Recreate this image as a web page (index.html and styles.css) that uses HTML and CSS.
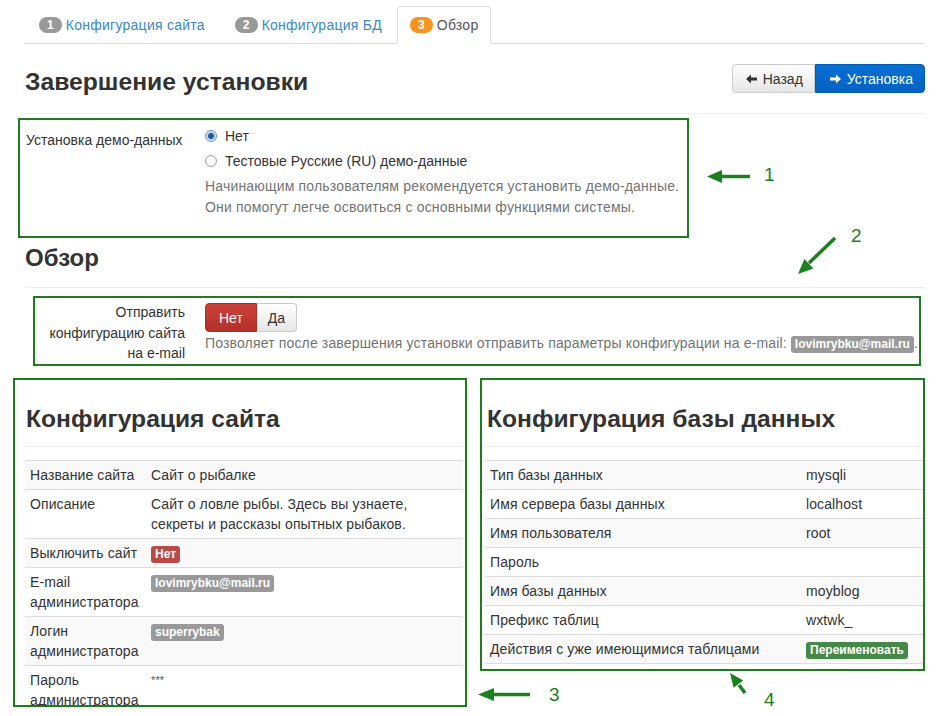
FILE: index.html
```html
<!DOCTYPE html>
<html>
  <head>
    <meta charset="utf-8" />
    <link rel="stylesheet" href="styles.css">
  </head>

  <body>
    <div class="page">
      <ul class="tabs">
        <li class="tab"><span class="step">1</span> Конфигурация сайта</li>
        <li class="tab"><span class="step">2</span> Конфигурация БД</li>
        <li class="tab active"><span class="step step-current">3</span> Обзор</li>
      </ul>

      <div class="page-header">
        <h1>Завершение установки</h1>
        <div class="btn-group">
          <button class="btn btn-back">
            <svg class="icon" width="11" height="10" viewBox="0 0 11 10"><path d="M0 5 L5 0.5 L5 3.4 L11 3.4 L11 6.6 L5 6.6 L5 9.5 Z" fill="#333"/></svg>
            Назад
          </button>
          <button class="btn btn-primary">
            <svg class="icon" width="11" height="10" viewBox="0 0 11 10"><path d="M11 5 L6 0.5 L6 3.4 L0 3.4 L0 6.6 L6 6.6 L6 9.5 Z" fill="#fff"/></svg>
            Установка
          </button>
        </div>
      </div>

      <div class="note note-demo">
        <div class="form-label">Установка демо-данных</div>
        <div class="form-controls">
          <label class="radio"><input type="radio" name="demo" checked /> Нет</label>
          <label class="radio"><input type="radio" name="demo" /> Тестовые Русские (RU) демо-данные</label>
          <p class="help help-demo">
            Начинающим пользователям рекомендуется установить демо-данные.<br />
            Они помогут легче освоиться с основными функциями системы.
          </p>
        </div>
      </div>

      <h2 class="section-title">Обзор</h2>

      <div class="note note-mail">
        <div class="form-label form-label-right">Отправить<br />конфигурацию сайта<br />на e-mail</div>
        <div class="form-controls form-controls-mail">
          <div class="toggle">
            <button class="toggle-btn toggle-on">Нет</button><button class="toggle-btn">Да</button>
          </div>
          <p class="help help-mail">
            Позволяет после завершения установки отправить параметры конфигурации на e-mail:
            <span class="label">lovimrybku@mail.ru</span>.
          </p>
        </div>
      </div>

      <div class="summary">
        <div class="note note-site">
          <h3>Конфигурация сайта</h3>
          <table class="info">
            <col class="key-site" />
            <col />
            <tr><td>Название сайта</td><td>Сайт о рыбалке</td></tr>
            <tr><td>Описание</td><td>Сайт о ловле рыбы. Здесь вы узнаете, секреты и рассказы опытных рыбаков.</td></tr>
            <tr><td>Выключить сайт</td><td><span class="label label-red">Нет</span></td></tr>
            <tr><td>E-mail администратора</td><td><span class="label">lovimrybku@mail.ru</span></td></tr>
            <tr><td>Логин администратора</td><td><span class="label">superrybak</span></td></tr>
            <tr><td>Пароль администратора</td><td class="stars">***</td></tr>
          </table>
        </div>

        <div class="note note-db">
          <h3>Конфигурация базы данных</h3>
          <table class="info">
            <col class="key-db" />
            <col />
            <tr><td>Тип базы данных</td><td>mysqli</td></tr>
            <tr><td>Имя сервера базы данных</td><td>localhost</td></tr>
            <tr><td>Имя пользователя</td><td>root</td></tr>
            <tr><td>Пароль</td><td></td></tr>
            <tr><td>Имя базы данных</td><td>moyblog</td></tr>
            <tr><td>Префикс таблиц</td><td>wxtwk_</td></tr>
            <tr><td>Действия с уже имеющимися таблицами</td><td><span class="label label-green">Переименовать</span></td></tr>
          </table>
        </div>
      </div>
    </div>

    <svg class="marks" width="938" height="716" viewBox="0 0 938 716">
      <g stroke="#1d8020" stroke-width="3.5" fill="#1d8020">
        <line x1="750" y1="176.5" x2="718" y2="176.5" />
        <polygon points="707,176.5 722,170 722,183" stroke="none" />
        <line x1="835" y1="238" x2="809" y2="263" />
        <polygon points="798,274 813.4,268.4 804.4,259" stroke="none" />
        <line x1="530" y1="694.5" x2="490" y2="694.5" />
        <polygon points="478,694.5 494,688 494,701" stroke="none" />
        <line x1="745" y1="693" x2="739" y2="685" />
        <polygon points="730,673 743.2,680.6 733.6,687.8" stroke="none" />
      </g>
      <g class="mark-num">
        <text x="764" y="181">1</text>
        <text x="851" y="242">2</text>
        <text x="549" y="701">3</text>
        <text x="764" y="706">4</text>
      </g>
    </svg>
  </body>
</html>
```

FILE: styles.css
```css
body {
  margin: 0;
  font-family: "Liberation Sans", Arial, sans-serif;
  font-size: 14px;
  color: #333;
  background: #fff;
}

.page {
  padding: 0 13px 0 25px;
}

/* steps */

.tabs {
  list-style: none;
  display: flex;
  margin: 6px 0 0 -1px;
  padding: 0;
  border-bottom: 1px solid #ddd;
}

.tab {
  padding: 8px 14px 8px 14px;
  line-height: 20px;
  letter-spacing: 0.25px;
  color: #3a87c3;
  border: 1px solid transparent;
  border-radius: 4px 4px 0 0;
  margin-bottom: -1px;
}

.tab.active {
  padding: 8px 12px 8px 12px;
  color: #555;
  background: #fff;
  border-color: #ddd;
  border-bottom-color: #fff;
}

.step {
  display: inline-block;
  padding: 1px 8px;
  font-size: 12px;
  font-weight: bold;
  line-height: 14px;
  letter-spacing: 0;
  color: #fff;
  background: #999;
  border-radius: 9px;
  vertical-align: 1px;
}

.step-current {
  background: #f7941d;
}

/* header */

.page-header {
  display: flex;
  justify-content: space-between;
  align-items: flex-start;
  padding-bottom: 17px;
  border-bottom: 1px solid #eee;
}

h1 {
  margin: 24px 0 0;
  font-size: 24.7px;
  line-height: 28px;
  font-weight: bold;
}

.btn-group {
  display: flex;
  margin-top: 20px;
}

.btn {
  display: inline-flex;
  align-items: center;
  gap: 6px;
  height: 29px;
  padding: 0 11px 0 13px;
  font-family: inherit;
  font-size: 14px;
  color: #333;
  background: linear-gradient(#fff, #e6e6e6);
  border: 1px solid #ccc;
  border-radius: 4px 0 0 4px;
}

.btn-primary {
  padding-left: 14px;
  color: #fff;
  background: linear-gradient(#0a70d4, #0062c2);
  border-color: #005bb5;
  border-radius: 0 4px 4px 0;
}

/* annotation frames */

.note {
  border: 2px solid #1e7b1e;
  box-sizing: border-box;
}

.note-demo {
  display: flex;
  width: 671px;
  margin: 4px 0 0 -7px;
  padding: 6px 0 18px 6px;
}

.form-label {
  width: 179px;
  flex: none;
  padding-top: 4px;
  line-height: 20px;
}

.radio {
  display: flex;
  align-items: center;
  gap: 8px;
  line-height: 20px;
  margin-bottom: 5px;
}

.radio input {
  appearance: none;
  width: 12px;
  height: 12px;
  margin: 0;
  border: 1px solid #a5a5a5;
  border-radius: 50%;
  background: radial-gradient(circle, #fff 40%, #e3e3e3);
}

.radio input:checked {
  border-color: #6c8fb8;
  background: radial-gradient(circle, #1f5fa8 0 2.6px, #9fc0e4 3.2px, #eaf2fb 5px);
}

.help {
  margin: 0;
  color: #737373;
  line-height: 21px;
}

.help-demo {
  letter-spacing: 0.18px;
}

.section-title {
  margin: 6px 0 0;
  padding-bottom: 15px;
  font-size: 24px;
  line-height: 28px;
  border-bottom: 1px solid #eee;
}

.note-mail {
  display: flex;
  margin: 8px 4px 0 8px;
}

.form-label-right {
  width: 150px;
  margin-right: 20px;
  text-align: right;
  line-height: 20.5px;
}

.form-controls-mail {
  padding-top: 5px;
}

.toggle {
  display: flex;
}

.toggle-btn {
  height: 29px;
  padding: 0 11px;
  font-family: inherit;
  font-size: 14px;
  color: #333;
  background: linear-gradient(#fff, #e6e6e6);
  border: 1px solid #ccc;
  border-left: none;
  border-radius: 0 4px 4px 0;
}

.toggle-on {
  padding: 0 13px;
  color: #fff;
  background: linear-gradient(#c9413a, #b5302a);
  border: 1px solid #a8302a;
  border-radius: 4px 0 0 4px;
}

.help-mail {
  margin-top: 1px;
  line-height: 20px;
  letter-spacing: 0.15px;
}

.label {
  display: inline-block;
  padding: 2px 4px;
  font-size: 12px;
  font-weight: bold;
  line-height: 13px;
  letter-spacing: 0;
  color: #fff;
  background: #999;
  border-radius: 3px;
}

.label-red {
  background: #b94a48;
}

.label-green {
  background: #468847;
}

/* summary tables */

.summary {
  display: grid;
  grid-template-columns: 454px 445px;
  column-gap: 13px;
  align-items: start;
  margin: 12px 0 0 -12px;
}

.note-site {
  height: 329px;
  padding: 0 2px 0 10px;
}

.note-db {
  padding: 0 0 5px 3px;
}

h3 {
  margin: 24px 0 0;
  padding: 0 0 12px 1px;
  font-size: 24.6px;
  line-height: 30px;
  border-bottom: 1px solid #eee;
}

.note-db h3 {
  padding-left: 2px;
}

.info {
  width: 100%;
  margin-top: 13px;
  table-layout: fixed;
  border-collapse: collapse;
  letter-spacing: 0.1px;
}

.info td {
  padding: 4px 5px;
  line-height: 20px;
  vertical-align: top;
  border-top: 1px solid #ddd;
}

.info tr:last-child td {
  border-bottom: 1px solid #ddd;
}

.info tr:nth-child(odd) td {
  background: #f9f9f9;
}

.key-site {
  width: 121px;
}

.key-db {
  width: 316px;
}

.stars {
  font-size: 11px;
  line-height: 18px;
  color: #555;
}

.marks {
  position: absolute;
  left: 0;
  top: 0;
  pointer-events: none;
}

.mark-num {
  font-family: "Liberation Sans", Arial, sans-serif;
  font-size: 19px;
  fill: #1d8020;
}
```
